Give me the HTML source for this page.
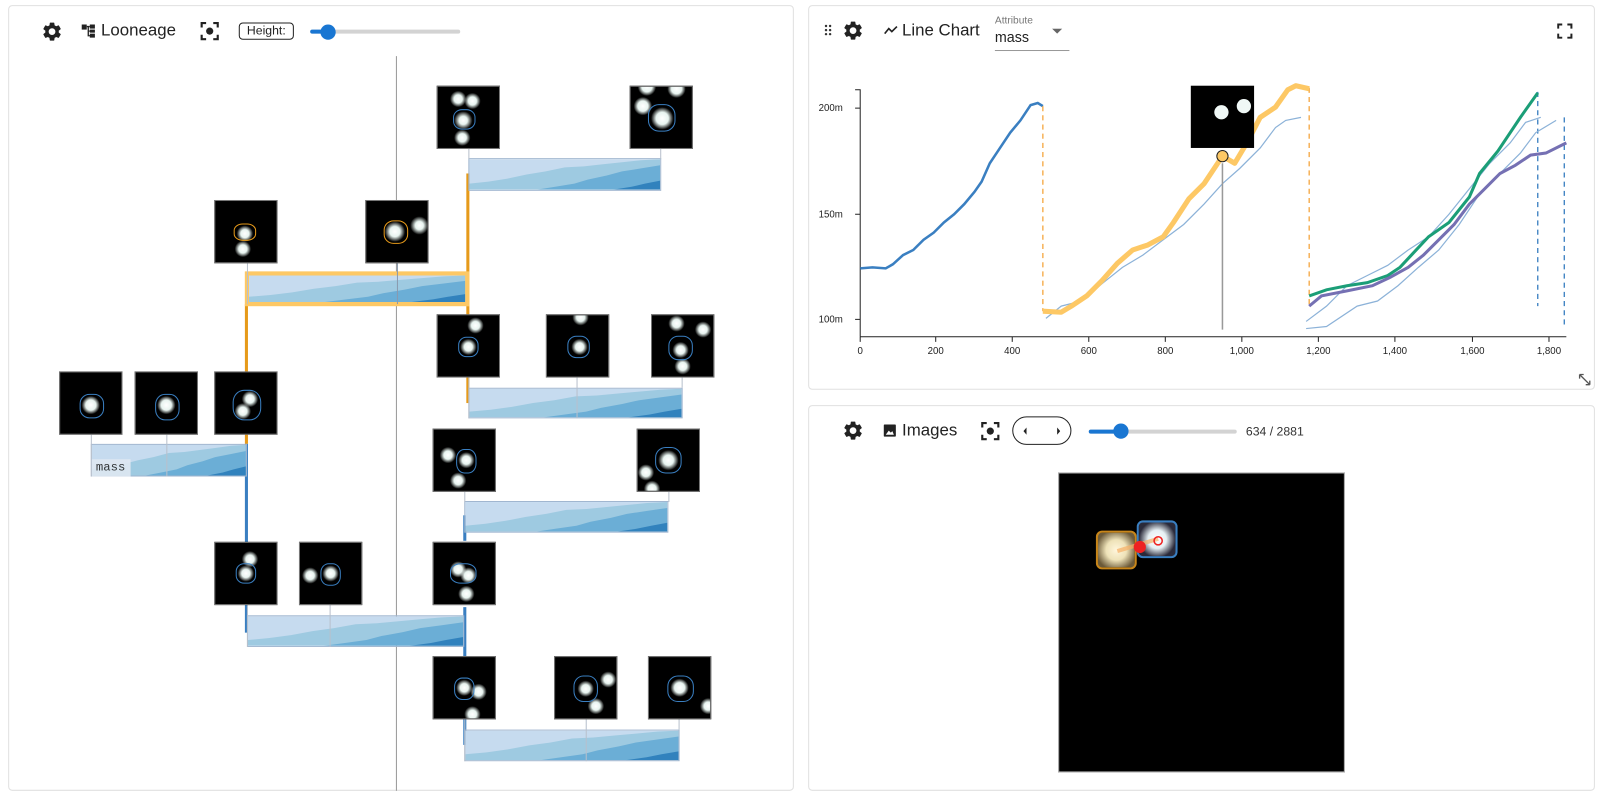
<!DOCTYPE html>
<html><head><meta charset="utf-8"><style>
*{box-sizing:border-box;margin:0;padding:0}
html,body{width:1600px;height:800px;overflow:hidden;background:#fff;font-family:"Liberation Sans",sans-serif;color:#222}
#w{position:absolute;left:0;top:0;width:1568px;height:784px;transform:scale(1.020408);transform-origin:0 0}
.p{position:absolute;border:1px solid #e0e0e0;border-radius:4px;background:#fff}
.a{position:absolute}
.t{position:absolute;width:62px;height:62px;background-color:#000;border:1px solid #777}
.r{position:absolute;border:1.5px solid #3a7fc1;border-radius:40%}
.bar{position:absolute;overflow:hidden;border:1px solid #9fb5cf}
.vl{position:absolute;width:1px;background:#b8c0cc}
.txt{position:absolute;font-size:16px;white-space:nowrap}
</style></head><body><div id="w">
<svg width="0" height="0" style="position:absolute"><defs>
<symbol id="g" viewBox="0 0 24 24"><path fill="#222" d="M19.14 12.94c.04-.3.06-.61.06-.94 0-.32-.02-.64-.07-.94l2.03-1.58c.18-.14.23-.41.12-.61l-1.92-3.32c-.12-.22-.37-.29-.59-.22l-2.39.96c-.5-.38-1.03-.7-1.62-.94l-.36-2.540c-.04-.24-.24-.41-.48-.41h-3.84c-.24 0-.43.17-.47.41l-.36 2.54c-.59.24-1.13.57-1.62.94l-2.39-.96c-.22-.08-.47 0-.59.22L2.74 8.87c-.12.21-.08.47.12.61l2.03 1.58c-.05.3-.09.63-.09.94s.02.64.07.94l-2.03 1.58c-.18.14-.23.41-.12.61l1.92 3.32c.12.22.37.29.59.22l2.39-.96c.5.38 1.03.7 1.62.94l.36 2.54c.05.24.24.41.48.41h3.84c.24 0 .44-.17.47-.41l.36-2.54c.59-.24 1.13-.56 1.62-.94l2.39.96c.22.08.47 0 .59-.22l1.92-3.32c.12-.22.07-.47-.12-.61l-2.01-1.58zM12 15.6c-1.98 0-3.6-1.620-3.6-3.6s1.62-3.6 3.6-3.6 3.6 1.62 3.6 3.6-1.62 3.6-3.6 3.6z"/></symbol>
<symbol id="f" viewBox="0 0 24 24"><path fill="none" stroke="#222" stroke-width="2.4" d="M3 8V3h5M16 3h5v5M21 16v5h-5M8 21H3v-5"/><circle cx="12" cy="12" r="4" fill="#222"/></symbol>
<symbol id="h" viewBox="0 0 100 30" preserveAspectRatio="none"><rect width="100" height="30" fill="#c6dbef"/><path d="M0 30V24L10 22L20 19L30 15L40 12L50 8L60 7L70 5L80 3L90 1L100 0V30Z" fill="#9ecae1"/><path d="M35 30L45 27L55 24L62 20L72 16L80 12L90 9L100 6V30Z" fill="#6baed6"/><path d="M75 30L85 27L92 24L100 21V30Z" fill="#3182bd"/></symbol>
</defs></svg>

<!-- LEFT PANEL -->
<div class="p" style="left:8px;top:5px;width:770px;height:770px"></div>
<svg class="a" style="left:40px;top:20px" width="22" height="22"><use href="#g"/></svg>
<svg class="a" style="left:80px;top:24px" width="14" height="13" viewBox="0 0 14 13"><rect x="0" y="0" width="5" height="5" fill="#222"/><rect x="8" y="0" width="5" height="4" fill="#222"/><rect x="8" y="5" width="5" height="3" fill="#222"/><rect x="8" y="9" width="5" height="4" fill="#222"/><path d="M5 2H8M6.5 2V11H8M6.5 6.5H8" stroke="#222" stroke-width="1.3" fill="none"/></svg>
<div class="txt" style="left:99px;top:21px;font-size:16.5px">Looneage</div>
<svg class="a" style="left:195px;top:20px" width="21" height="21"><use href="#f"/></svg>
<div class="a" style="left:234px;top:22px;width:54px;height:17px;border:1.2px solid #222;border-radius:4px;font-size:12px;line-height:15px;text-align:center">Height:</div>
<div class="a" style="left:304px;top:29px;width:147px;height:4px;background:#d3d3d3;border-radius:2px"></div>
<div class="a" style="left:304px;top:29px;width:17px;height:4px;background:#1976d2;border-radius:2px"></div>
<div class="a" style="left:314px;top:24px;width:15px;height:15px;background:#1976d2;border-radius:50%"></div>

<!-- grey center line -->
<div class="a" style="left:388px;top:55px;width:1px;height:720px;background:#999"></div>

<!-- connector lines -->
<div class="a" style="left:457px;top:170px;width:3px;height:130px;background:#e69a1a"></div>
<div class="a" style="left:457px;top:300px;width:3px;height:95px;background:#e69a1a"></div>
<div class="a" style="left:240px;top:298px;width:3px;height:137px;background:#e69a1a"></div>
<div class="a" style="left:240px;top:435px;width:3px;height:185px;background:#3a7fc1"></div>
<div class="a" style="left:454px;top:505px;width:3px;height:25px;background:#3a7fc1"></div>
<div class="a" style="left:454px;top:595px;width:3px;height:135px;background:#3a7fc1"></div>

<!-- bars -->
<div class="bar" style="left:459px;top:155px;width:189px;height:32px"><svg width="100%" height="100%"><use href="#h"/></svg></div>
<div class="a" style="left:240px;top:266px;width:220px;height:34px;border:4px solid #fdc865;background:#fdc865"></div>
<div class="bar" style="left:244px;top:270px;width:212px;height:26px;border:0"><svg width="100%" height="100%"><use href="#h"/></svg></div>
<div class="bar" style="left:459px;top:380px;width:210px;height:30px"><svg width="100%" height="100%"><use href="#h"/></svg></div>
<div class="bar" style="left:89px;top:435px;width:153px;height:32px"><svg width="100%" height="100%"><use href="#h"/></svg></div>
<div class="a" style="left:90px;top:450px;width:38px;height:17px;background:#dfe8f2;opacity:.9;font-family:'Liberation Mono',monospace;font-size:12px;line-height:17px;padding-left:4px">mass</div>
<div class="bar" style="left:455px;top:491px;width:200px;height:31px"><svg width="100%" height="100%"><use href="#h"/></svg></div>
<div class="bar" style="left:242px;top:603px;width:213px;height:31px"><svg width="100%" height="100%"><use href="#h"/></svg></div>
<div class="bar" style="left:455px;top:715px;width:211px;height:31px"><svg width="100%" height="100%"><use href="#h"/></svg></div>

<!-- thumb stems -->
<div class="vl" style="left:459px;top:146px;height:10px"></div><div class="vl" style="left:647px;top:146px;height:10px"></div>
<div class="vl" style="left:242px;top:258px;height:40px"></div><div class="vl" style="left:389px;top:258px;height:40px;background:#8a9aae"></div>
<div class="vl" style="left:459px;top:370px;height:40px"></div><div class="vl" style="left:565px;top:370px;height:40px"></div><div class="vl" style="left:668px;top:370px;height:10px"></div>
<div class="vl" style="left:89px;top:426px;height:41px"></div><div class="vl" style="left:163px;top:426px;height:41px"></div>
<div class="vl" style="left:455px;top:482px;height:10px"></div><div class="vl" style="left:655px;top:482px;height:10px"></div>
<div class="vl" style="left:242px;top:593px;height:41px"></div><div class="vl" style="left:323px;top:593px;height:41px"></div>
<div class="vl" style="left:455px;top:705px;height:41px"></div><div class="vl" style="left:574px;top:705px;height:41px"></div><div class="vl" style="left:665px;top:705px;height:10px"></div>

<!-- thumbnails -->
<div class="t" style="left:428px;top:84px;background-image:radial-gradient(circle at 25px 33px,#fff 0,#e8f4f0 4px,transparent 9px),radial-gradient(circle at 20px 12px,#fff 0,#e8f4f0 4px,transparent 8px),radial-gradient(circle at 34px 14px,#fff 0,#e8f4f0 4px,transparent 8px),radial-gradient(circle at 24px 50px,#fff 0,#e8f4f0 4px,transparent 8px)"><div class="r" style="left:15px;top:22px;width:22px;height:20px"></div></div>
<div class="t" style="left:617px;top:84px;background-image:radial-gradient(circle at 31px 31px,#fff 0,#e8f4f0 6px,transparent 11px),radial-gradient(circle at 12px 19px,#fff 0,#e8f4f0 5px,transparent 9px),radial-gradient(circle at 16px 0,#fff 0,#e8f4f0 5px,transparent 9px),radial-gradient(circle at 45px 2px,#fff 0,#e8f4f0 5px,transparent 9px)"><div class="r" style="left:17px;top:17px;width:27px;height:27px"></div></div>
<div class="t" style="left:210px;top:196px;background-image:radial-gradient(circle at 29px 32px,#fff 0,#e8f4f0 4px,transparent 8px),radial-gradient(circle at 27px 47px,#fff 0,#e8f4f0 4px,transparent 8px)"><div class="r" style="left:18px;top:22px;width:22px;height:17px;border-color:#e69a1a"></div></div>
<div class="t" style="left:358px;top:196px;background-image:radial-gradient(circle at 28px 30px,#fff 0,#e8f4f0 5px,transparent 10px),radial-gradient(circle at 52px 24px,#fff 0,#e8f4f0 4px,transparent 9px)"><div class="r" style="left:17px;top:19px;width:24px;height:23px;border-color:#e69a1a"></div></div>
<div class="t" style="left:428px;top:308px;background-image:radial-gradient(circle at 30px 31px,#fff 0,#e8f4f0 4px,transparent 8px),radial-gradient(circle at 37px 10px,#fff 0,#e8f4f0 4px,transparent 8px)"><div class="r" style="left:20px;top:21px;width:20px;height:20px"></div></div>
<div class="t" style="left:535px;top:308px;background-image:radial-gradient(circle at 32px 31px,#fff 0,#e8f4f0 4px,transparent 8px),radial-gradient(circle at 33px 2px,#fff 0,#e8f4f0 4px,transparent 8px)"><div class="r" style="left:20px;top:20px;width:22px;height:22px"></div></div>
<div class="t" style="left:638px;top:308px;background-image:radial-gradient(circle at 28px 34px,#fff 0,#e8f4f0 4px,transparent 8px),radial-gradient(circle at 50px 14px,#fff 0,#e8f4f0 4px,transparent 8px),radial-gradient(circle at 30px 50px,#fff 0,#e8f4f0 4px,transparent 8px),radial-gradient(circle at 24px 8px,#fff 0,#e8f4f0 4px,transparent 8px)"><div class="r" style="left:16px;top:20px;width:24px;height:24px"></div></div>
<div class="t" style="left:58px;top:364px;background-image:radial-gradient(circle at 30px 32px,#fff 0,#e8f4f0 5px,transparent 9px)"><div class="r" style="left:19px;top:21px;width:24px;height:24px"></div></div>
<div class="t" style="left:132px;top:364px;background-image:radial-gradient(circle at 30px 32px,#fff 0,#e8f4f0 5px,transparent 9px)"><div class="r" style="left:19px;top:21px;width:24px;height:26px"></div></div>
<div class="t" style="left:210px;top:364px;background-image:radial-gradient(circle at 34px 26px,#fff 0,#e8f4f0 4px,transparent 8px),radial-gradient(circle at 27px 38px,#fff 0,#e8f4f0 4px,transparent 8px)"><div class="r" style="left:17px;top:17px;width:28px;height:30px"></div></div>
<div class="t" style="left:424px;top:420px;background-image:radial-gradient(circle at 14px 25px,#fff 0,#e8f4f0 4px,transparent 8px),radial-gradient(circle at 32px 30px,#fff 0,#e8f4f0 4px,transparent 8px),radial-gradient(circle at 24px 50px,#fff 0,#e8f4f0 4px,transparent 8px)"><div class="r" style="left:22px;top:19px;width:20px;height:24px"></div></div>
<div class="t" style="left:624px;top:420px;background-image:radial-gradient(circle at 30px 30px,#fff 0,#e8f4f0 5px,transparent 10px),radial-gradient(circle at 8px 42px,#fff 0,#e8f4f0 4px,transparent 8px),radial-gradient(circle at 14px 58px,#fff 0,#e8f4f0 4px,transparent 8px)"><div class="r" style="left:17px;top:17px;width:26px;height:26px"></div></div>
<div class="t" style="left:210px;top:531px;background-image:radial-gradient(circle at 34px 16px,#fff 0,#e8f4f0 4px,transparent 8px),radial-gradient(circle at 30px 30px,#fff 0,#e8f4f0 4px,transparent 8px)"><div class="r" style="left:20px;top:20px;width:20px;height:20px"></div></div>
<div class="t" style="left:293px;top:531px;background-image:radial-gradient(circle at 10px 32px,#fff 0,#e8f4f0 4px,transparent 8px),radial-gradient(circle at 30px 30px,#fff 0,#e8f4f0 4px,transparent 8px)"><div class="r" style="left:20px;top:20px;width:20px;height:22px"></div></div>
<div class="t" style="left:424px;top:531px;background-image:radial-gradient(circle at 24px 26px,#fff 0,#e8f4f0 4px,transparent 8px),radial-gradient(circle at 34px 32px,#fff 0,#e8f4f0 4px,transparent 8px),radial-gradient(circle at 32px 50px,#fff 0,#e8f4f0 4px,transparent 8px)"><div class="r" style="left:16px;top:20px;width:26px;height:20px"></div></div>
<div class="t" style="left:424px;top:643px;background-image:radial-gradient(circle at 30px 30px,#fff 0,#e8f4f0 4px,transparent 8px),radial-gradient(circle at 44px 34px,#fff 0,#e8f4f0 4px,transparent 8px),radial-gradient(circle at 38px 56px,#fff 0,#e8f4f0 4px,transparent 8px)"><div class="r" style="left:20px;top:20px;width:20px;height:22px"></div></div>
<div class="t" style="left:543px;top:643px;background-image:radial-gradient(circle at 30px 31px,#fff 0,#e8f4f0 4px,transparent 8px),radial-gradient(circle at 52px 22px,#fff 0,#e8f4f0 4px,transparent 8px),radial-gradient(circle at 40px 48px,#fff 0,#e8f4f0 4px,transparent 8px)"><div class="r" style="left:18px;top:18px;width:24px;height:26px"></div></div>
<div class="t" style="left:635px;top:643px;background-image:radial-gradient(circle at 30px 30px,#fff 0,#e8f4f0 5px,transparent 9px),radial-gradient(circle at 58px 48px,#fff 0,#e8f4f0 4px,transparent 8px)"><div class="r" style="left:18px;top:18px;width:26px;height:26px"></div></div>

<!-- RIGHT TOP PANEL -->
<div class="p" style="left:792px;top:5px;width:771px;height:377px"></div>
<svg class="a" style="left:808px;top:24px" width="8" height="12"><g fill="#333"><circle cx="1.5" cy="1.5" r="1.2"/><circle cx="5.5" cy="1.5" r="1.2"/><circle cx="1.5" cy="5.5" r="1.2"/><circle cx="5.5" cy="5.5" r="1.2"/><circle cx="1.5" cy="9.5" r="1.2"/><circle cx="5.5" cy="9.5" r="1.2"/></g></svg>
<svg class="a" style="left:825px;top:19px" width="22" height="22"><use href="#g"/></svg>
<svg class="a" style="left:866px;top:25px" width="14" height="10" viewBox="0 0 14 10"><path d="M1 8L5 3L8 6L13 1" stroke="#222" stroke-width="1.6" fill="none"/></svg>
<div class="txt" style="left:884px;top:21px;font-size:16.5px">Line Chart</div>
<div class="txt" style="left:975px;top:15px;font-size:10px;color:#777">Attribute</div>
<div class="txt" style="left:975px;top:28px;font-size:14px">mass</div>
<svg class="a" style="left:1031px;top:28px" width="10" height="6"><path d="M0 0H10L5 5Z" fill="#666"/></svg>
<div class="a" style="left:975px;top:49px;width:73px;height:1px;background:#999"></div>
<svg class="a" style="left:1526px;top:23px" width="15" height="15" viewBox="0 0 15 15"><path d="M1 5V1H5M10 1H14V5M14 10V14H10M5 14H1V10" stroke="#222" stroke-width="2" fill="none"/></svg>

<svg class="a" style="left:792px;top:60px" width="771" height="322" viewBox="792 60 771 322" font-family="Liberation Sans" font-size="9.5" fill="#222">
<path d="M838 88H843V330M838 106H843M838 210H843M838 313H843" stroke="#222" fill="none"/>
<text x="826" y="109" text-anchor="end">200m</text><text x="826" y="213" text-anchor="end">150m</text><text x="826" y="316" text-anchor="end">100m</text>
<path d="M843 330H1535M843 330v5M917 330v5M992 330v5M1067 330v5M1142 330v5M1217 330v5M1292 330v5M1367 330v5M1443 330v5M1518 330v5" stroke="#222" fill="none"/>
<g text-anchor="middle"><text x="843" y="347">0</text><text x="917" y="347">200</text><text x="992" y="347">400</text><text x="1067" y="347">600</text><text x="1142" y="347">800</text><text x="1217" y="347">1,000</text><text x="1292" y="347">1,200</text><text x="1367" y="347">1,400</text><text x="1443" y="347">1,600</text><text x="1518" y="347">1,800</text></g>
<path d="M843 263L855 262L868 263L875 259L885 250L895 245L905 235L915 228L925 218L935 210L945 200L955 188L962 178L970 160L980 145L990 130L1000 118L1010 103L1017 101L1022 104" stroke="#3a7fc1" stroke-width="2.5" fill="none"/>
<path d="M1022 104V305M1283 86V300" stroke="#f5a742" stroke-width="1.3" stroke-dasharray="5,4" fill="none"/>
<path d="M1507 90V300M1533 115V318" stroke="#3a7fc1" stroke-width="1.3" stroke-dasharray="5,4" fill="none"/>
<path d="M1025 312L1040 300L1060 295L1080 278L1100 262L1120 250L1140 235L1160 220L1180 200L1198 180L1215 165L1235 145L1250 125L1260 118L1275 115" stroke="#8cb2d8" stroke-width="1.2" fill="none"/>
<path d="M1022 305L1040 306L1050 300L1065 290L1080 275L1095 258L1110 245L1125 240L1140 232L1150 218L1165 195L1180 180L1198 153L1210 160L1222 140L1235 115L1250 105L1262 88L1270 84L1283 87" stroke="#fdc865" stroke-width="5" fill="none" stroke-linejoin="round"/>
<path d="M1280 315L1300 300L1320 280L1340 270L1360 260L1380 245L1400 232L1420 210L1440 185L1460 160L1480 140L1495 120L1510 115M1280 322L1300 320L1330 300L1350 295L1370 280L1390 262L1410 245L1430 220L1450 190L1470 170L1490 150L1505 130L1525 118" stroke="#8cb2d8" stroke-width="1.2" fill="none"/>
<path d="M1283 290L1300 284L1320 280L1340 277L1360 270L1372 262L1385 248L1400 232L1420 218L1440 193L1450 170L1468 148L1490 115L1507 91" stroke="#1b9e77" stroke-width="3" fill="none"/>
<path d="M1283 300L1295 290L1320 285L1345 280L1362 272L1380 262L1395 250L1410 235L1425 220L1440 200L1455 185L1470 170L1485 162L1500 152L1515 150L1535 140" stroke="#7570b3" stroke-width="3" fill="none"/>
<path d="M1198 160V323" stroke="#999" stroke-width="1.5"/>
<rect x="1167" y="84" width="62" height="61" fill="#000"/>
<circle cx="1197" cy="110" r="7" fill="#f0f8f6"/><circle cx="1219" cy="104" r="7" fill="#f0f8f6"/>
<circle cx="1198" cy="153" r="5.5" fill="#fdc865" stroke="#222"/>
<path d="M1548 367L1558 377M1548 367v4M1548 367h4M1558 377v-4M1558 377h-4" stroke="#555" stroke-width="1.3" fill="none"/>
</svg>

<!-- RIGHT BOTTOM PANEL -->
<div class="p" style="left:792px;top:397px;width:771px;height:378px"></div>
<svg class="a" style="left:825px;top:411px" width="22" height="22"><use href="#g"/></svg>
<svg class="a" style="left:866px;top:416px" width="12" height="12" viewBox="0 0 12 12"><rect x="0" y="0" width="12" height="12" rx="1" fill="#222"/><path d="M2 10L5 6L7 8L8.5 6.5L10 10Z" fill="#fff"/></svg>
<div class="txt" style="left:884px;top:413px;font-size:16.5px">Images</div>
<svg class="a" style="left:960px;top:412px" width="21" height="21"><use href="#f"/></svg>
<div class="a" style="left:992px;top:408px;width:58px;height:28px;border:1.2px solid #222;border-radius:14px"></div>
<svg class="a" style="left:1003px;top:419px" width="36" height="7"><path d="M0 3.5L3 0V7Z M36 3.5L33 0V7Z" fill="#222"/></svg>
<div class="a" style="left:1067px;top:421px;width:145px;height:4px;background:#d3d3d3;border-radius:2px"></div>
<div class="a" style="left:1067px;top:421px;width:31px;height:4px;background:#1976d2;border-radius:2px"></div>
<div class="a" style="left:1091px;top:415px;width:15px;height:15px;background:#1976d2;border-radius:50%"></div>
<div class="txt" style="left:1221px;top:416px;font-size:12px;color:#333">634 / 2881</div>

<div class="a" style="left:1037px;top:463px;width:281px;height:294px;background:#000;border:1px solid #bbb"></div>
<div class="a" style="left:1074px;top:520px;width:40px;height:38px;border:2.5px solid #c8861a;border-radius:6px;background:radial-gradient(circle at 50% 50%,#fff6dc 0,#eee2b8 10px,#6b5a3a 20px)"></div>
<div class="a" style="left:1114px;top:510px;width:40px;height:37px;border:2px solid #3a7fc1;border-radius:6px;background:radial-gradient(circle at 50% 50%,#fff 0,#e6f0f4 9px,#2a2a3a 18px)"></div>
<svg class="a" style="left:1090px;top:520px" width="60" height="30"><path d="M5 20L45 8" stroke="#f7b066" stroke-width="4" opacity=".7"/><circle cx="27" cy="16" r="6" fill="#e22"/><circle cx="45" cy="10" r="4" fill="none" stroke="#e22" stroke-width="1.5"/></svg>
</div></body></html>
